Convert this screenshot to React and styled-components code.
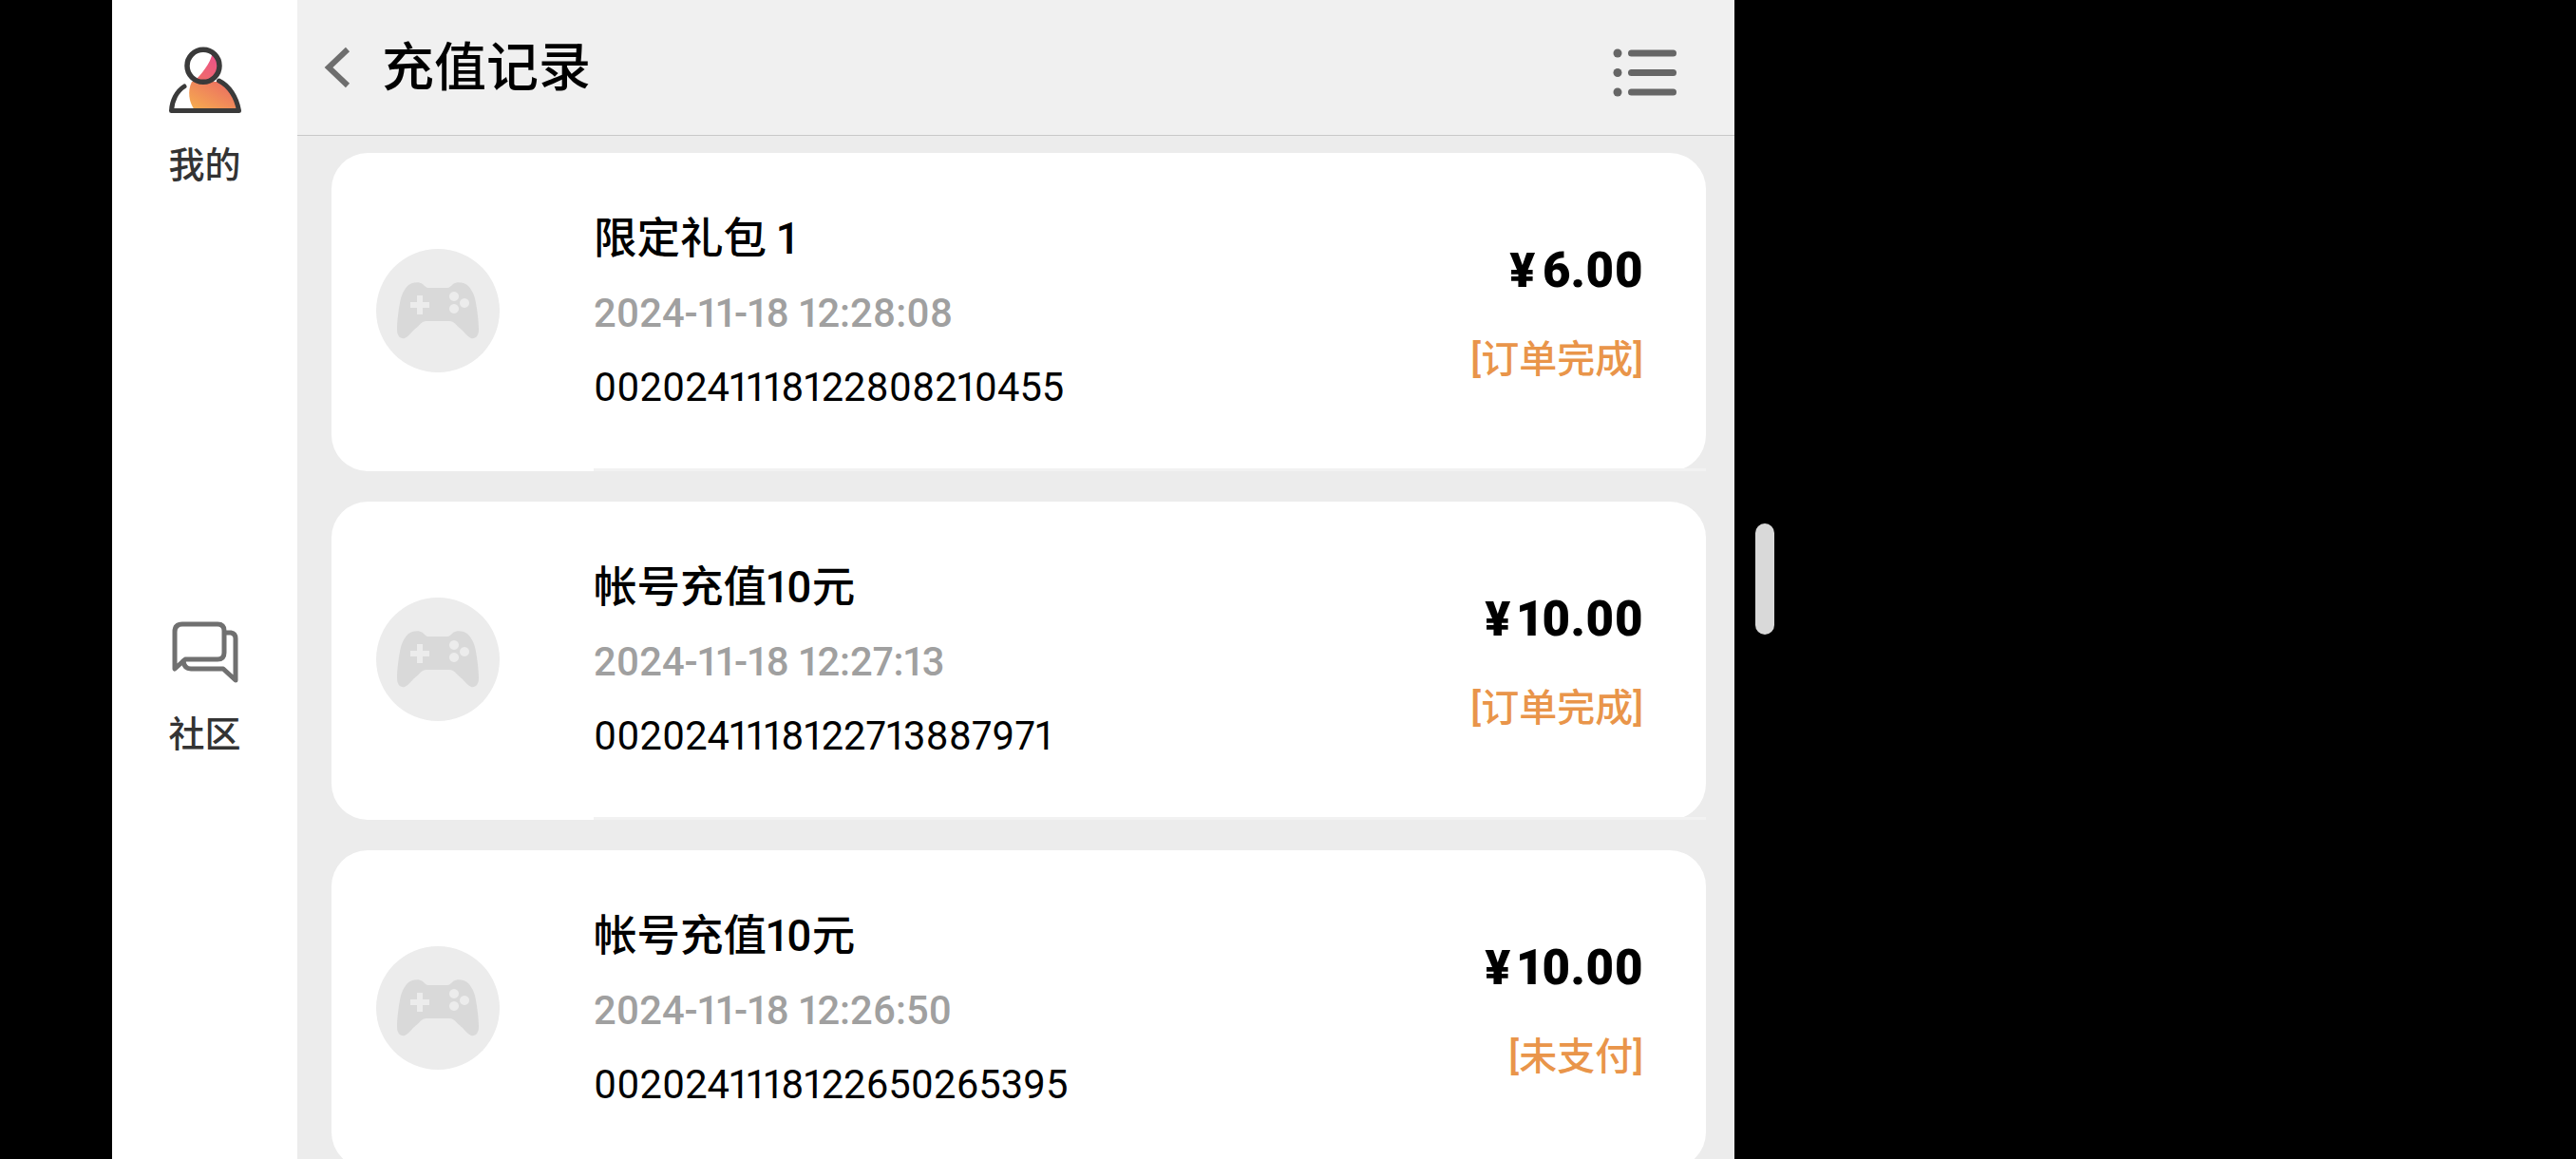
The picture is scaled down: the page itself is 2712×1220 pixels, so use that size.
import React from 'react';
import styled, { createGlobalStyle } from 'styled-components';

const GlobalStyle = createGlobalStyle`
  html, body {
    margin: 0;
    padding: 0;
    background: #000;
  }
  body {
    font-family: Roboto, "Noto Sans CJK SC", sans-serif;
    font-variant-numeric: proportional-nums;
  }
`;

const Page = styled.div`
  position: relative;
  display: flex;
  width: 2712px;
  height: 1220px;
  padding-left: 118px;
  box-sizing: border-box;
  overflow: hidden;
  background: #000;
`;

const Sidebar = styled.nav`
  width: 195px;
  flex-shrink: 0;
  background: #fff;
  display: flex;
  flex-direction: column;
`;

const NavItem = styled.div`
  height: 600px;
  padding-top: ${(p) => p.$top}px;
  box-sizing: border-box;
  display: flex;
  flex-direction: column;
  align-items: center;
`;

const NavIcon = styled.svg`
  display: block;
  flex-shrink: 0;
`;

const NavLabel = styled.div`
  margin-top: ${(p) => p.$gap}px;
  font-size: 38px;
  line-height: 44px;
  font-weight: 500;
  color: #333;
`;

const Main = styled.main`
  width: 1513px;
  flex-shrink: 0;
  background: #ececec;
  display: flex;
  flex-direction: column;
`;

const Header = styled.header`
  height: 142px;
  flex-shrink: 0;
  background: #f0f0f0;
  border-bottom: 1px solid #c8c8c8;
  display: flex;
  align-items: center;
  padding: 0 56px 0 28px;
`;

const BackIcon = styled.svg`
  display: block;
`;

const PageTitle = styled.h1`
  flex: 1;
  margin: 0 0 0 33px;
  font-size: 55px;
  line-height: 64px;
  font-weight: 500;
  color: #000;
`;

const MenuIcon = styled.svg`
  display: block;
  margin-top: 11px;
`;

const List = styled.div`
  flex: 1;
  overflow: hidden;
  padding: 18px 30px 0 36px;
  display: flex;
  flex-direction: column;
  gap: 32px;
`;

const Card = styled.article`
  flex-shrink: 0;
  height: 335px;
  background: #fff;
  border-radius: 38px;
  display: flex;
`;

const IconCol = styled.div`
  width: 276px;
  flex-shrink: 0;
  padding-left: 47px;
  padding-bottom: 4px;
  box-sizing: border-box;
  display: flex;
  align-items: center;
`;

const Avatar = styled.div`
  width: 130px;
  height: 130px;
  border-radius: 50%;
  background: #ececec;
  display: flex;
  align-items: center;
  justify-content: center;
`;

const CardBody = styled.div`
  flex: 1;
  display: flex;
  justify-content: space-between;
  align-items: center;
  padding-right: 66px;
  border-bottom: 3px solid #f2f2f2;
`;

const Info = styled.div`
  display: flex;
  flex-direction: column;
  padding-top: 5px;
`;

const Name = styled.div`
  font-size: 45.5px;
  line-height: 78px;
  font-weight: 500;
  color: #000;
`;

const Time = styled.div`
  font-size: 41.7px;
  line-height: 78px;
  color: #a0a0a0;
  font-weight: 500;
`;

const OrderNo = styled.div`
  font-size: 41.7px;
  line-height: 78px;
  color: #000;
`;

const Side = styled.div`
  display: flex;
  flex-direction: column;
  align-items: flex-end;
  padding-top: 8px;
`;

const Amount = styled.div`
  font-size: 51px;
  line-height: 94px;
  font-weight: 900;
  color: #000;
`;

const Yen = styled.span`
  margin-right: 7px;
  font-size: 50px;
`;

const Status = styled.div`
  font-size: 40px;
  line-height: 93px;
  font-weight: 500;
  color: #e9954a;
`;

const ScrollPill = styled.div`
  position: absolute;
  left: 1848px;
  top: 551px;
  width: 20px;
  height: 117px;
  border-radius: 10px;
  background: #d9d9d9;
`;

const PersonIcon = () => (
  <NavIcon width="76" height="72" viewBox="0 0 76 72">
    <defs>
      <linearGradient id="bodyGrad" x1="0" y1="1" x2="1" y2="0">
        <stop offset="0" stopColor="#f6b04e" />
        <stop offset="1" stopColor="#ea6465" />
      </linearGradient>
      <linearGradient id="headGrad" x1="0" y1="1" x2="0.6" y2="0">
        <stop offset="0" stopColor="#ef7263" />
        <stop offset="1" stopColor="#ec4f8c" />
      </linearGradient>
      <clipPath id="headClip">
        <circle cx="36" cy="21.3" r="17" />
      </clipPath>
    </defs>
    <path d="M27 68C21 60 19 48 24 38H52C62 42 70 54 73 68Z" fill="url(#bodyGrad)" />
    <circle cx="36" cy="21.3" r="17" fill="#fff" />
    <path d="M46 4C46 14 38 26 28 36L36 42L58 30V4Z" fill="url(#headGrad)" clipPath="url(#headClip)" />
    <circle cx="36" cy="21.3" r="17" fill="none" stroke="#3a3a3a" strokeWidth="5.5" />
    <path d="M16 43C8 48 3 58 2.5 68.5H73.5C71 54 63 42 52.5 37" fill="none" stroke="#3a3a3a" strokeWidth="5" strokeLinecap="round" strokeLinejoin="round" />
  </NavIcon>
);

const ChatIcon = () => (
  <NavIcon width="70" height="66" viewBox="0 0 70 66" fill="none" stroke="#707070" strokeWidth="5" strokeLinejoin="round" strokeLinecap="round">
    <path d="M3 50V11Q3 3 11 3H48Q55 3 55 10V33Q55 40 48 40H14Z" />
    <path d="M56 12H62Q67 13 67 18V62L54 50H20Q13 50 12 42" />
  </NavIcon>
);

const GamepadIcon = () => (
  <svg width="86" height="60" viewBox="0 0 86 60">
    <path
      fill="#d9d9d9"
      fillRule="evenodd"
      d="M16 1C20 0 24 0 27 2C29 4 31 6 33 6H53C55 6 57 4 59 2C62 0 66 0 70 1C76 3 80 10 82 17C84 26 86 40 86 50C86 57 82 60 78 59C75 58 72 54 69 51C65 48 62 44 59 42C57 41 56 41 54 41H32C30 41 29 41 27 42C24 44 21 48 17 51C14 54 11 58 8 59C4 60 0 57 0 50C0 40 2 26 4 17C6 10 10 3 16 1ZM21 14V21H14V27H21V34H27V27H34V21H27V14ZM60 10a5 5 0 1 0 .01 0ZM71 17a5 5 0 1 0 .01 0ZM60 23a5 5 0 1 0 .01 0Z"
    />
  </svg>
);

const orders = [
  { name: '限定礼包 1', time: '2024-11-18 12:28:08', no: '0020241118122808210455', price: '6.00', status: '[订单完成]' },
  { name: '帐号充值10元', time: '2024-11-18 12:27:13', no: '0020241118122713887971', price: '10.00', status: '[订单完成]' },
  { name: '帐号充值10元', time: '2024-11-18 12:26:50', no: '0020241118122650265395', price: '10.00', status: '[未支付]' },
];

export default function App() {
  return (
    <Page>
      <GlobalStyle />
      <Sidebar>
        <NavItem $top={48}>
          <PersonIcon />
          <NavLabel $gap={32}>我的</NavLabel>
        </NavItem>
        <NavItem $top={54}>
          <ChatIcon />
          <NavLabel $gap={31}>社区</NavLabel>
        </NavItem>
      </Sidebar>
      <Main>
        <Header>
          <BackIcon width="28" height="44" viewBox="0 0 28 44">
            <path d="M25 3L5 22L25 41" fill="none" stroke="#6e6e6e" strokeWidth="6" />
          </BackIcon>
          <PageTitle>充值记录</PageTitle>
          <MenuIcon width="72" height="52" viewBox="0 0 72 52" fill="#666">
            <circle cx="5" cy="5" r="4.5" />
            <circle cx="5" cy="25.5" r="4.5" />
            <circle cx="5" cy="46" r="4.5" />
            <rect x="16" y="1.5" width="51" height="7" rx="3.5" />
            <rect x="16" y="22" width="51" height="7" rx="3.5" />
            <rect x="16" y="42.5" width="51" height="7" rx="3.5" />
          </MenuIcon>
        </Header>
        <List>
          {orders.map((order) => (
            <Card key={order.no}>
              <IconCol>
                <Avatar>
                  <GamepadIcon />
                </Avatar>
              </IconCol>
              <CardBody>
                <Info>
                  <Name>{order.name}</Name>
                  <Time>{order.time}</Time>
                  <OrderNo>{order.no}</OrderNo>
                </Info>
                <Side>
                  <Amount><Yen>¥</Yen>{order.price}</Amount>
                  <Status>{order.status}</Status>
                </Side>
              </CardBody>
            </Card>
          ))}
        </List>
      </Main>
      <ScrollPill />
    </Page>
  );
}
